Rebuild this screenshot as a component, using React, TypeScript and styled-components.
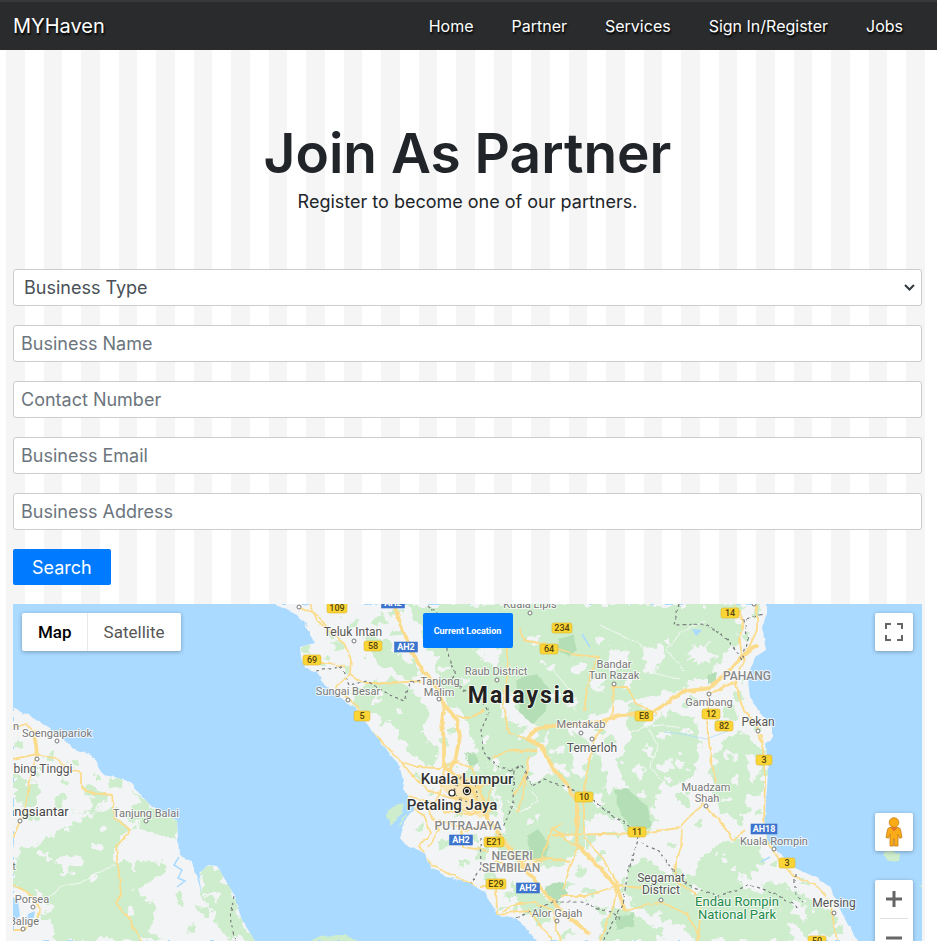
import React from "react";
import styled, { createGlobalStyle } from "styled-components";

const GlobalStyle = createGlobalStyle`
  * { box-sizing: border-box; }
  body { margin: 0; background: #fff; color: #212529; font-family: "Inter", "DM Sans", sans-serif; }
  button, input, select { font-family: inherit; }
`;

const Page = styled.div`
  display: flex;
  flex-direction: column;
  min-height: 100vh;
`;

const NavBar = styled.header`
  display: flex;
  align-items: center;
  justify-content: space-between;
  height: 50px;
  padding: 0 34px 0 13px;
  background: #292b2c;
  border-top: 2px solid #36383b;
`;

const Brand = styled.a`
  color: #fff;
  font-size: 20px;
  text-decoration: none;
  text-shadow: 1px 2px 2px #000;
`;

const NavLinks = styled.nav`
  display: flex;
  gap: 38px;
`;

const NavLink = styled.a`
  color: #fff;
  font-size: 16px;
  text-decoration: none;
  text-shadow: 1px 2px 2px #000;
`;

const Striped = styled.main`
  flex: 1;
  display: flex;
  flex-direction: column;
  margin: 0 12px 0 6px;
  padding: 0 3px 0 7px;
  background: repeating-linear-gradient(
    90deg,
    #f5f5f5 0 calc(100% / 49),
    #fff calc(100% / 49) calc(200% / 49)
  );
`;

const Hero = styled.section`
  display: flex;
  flex-direction: column;
  align-items: center;
  padding: 70px 0 51px;
  text-align: center;
`;

const Title = styled.h1`
  margin: 0;
  font-size: 55px;
  line-height: 66px;
  font-weight: 600;
`;

const Subtitle = styled.p`
  margin: 0;
  font-size: 18px;
  line-height: 32px;
`;

const Form = styled.form`
  display: flex;
  flex-direction: column;
  align-items: stretch;
  gap: 19px;
  margin-bottom: 19px;
`;

const fieldLook = `
  display: block;
  width: 100%;
  height: 37px;
  border: 1px solid #c9ccd0;
  border-radius: 3px;
  background: #fff;
  font-size: 18px;
  outline-color: #007bff;
`;

const TextField = styled.input`
  ${fieldLook}
  padding: 0 7px;
  color: #495057;
  &::placeholder { color: #6c757d; opacity: 1; }
`;

const SelectWrap = styled.div`
  position: relative;
  svg {
    position: absolute;
    right: 7px;
    top: 14px;
    pointer-events: none;
  }
`;

const SelectField = styled.select`
  ${fieldLook}
  appearance: none;
  padding: 0 24px 0 10px;
  color: #495057;
`;

const SearchButton = styled.button`
  align-self: flex-start;
  height: 36px;
  padding: 0 19px;
  border: 0;
  border-radius: 2px;
  background: #007bff;
  color: #fff;
  font-size: 18px;
`;

const MapFrame = styled.section`
  position: relative;
  flex: 1 0 337px;
  height: 337px;
  overflow: hidden;
  background: #aadaff;
  font-family: Roboto, sans-serif;
`;

const MapCanvas = styled.svg`
  display: block;
  width: 100%;
  height: 100%;
  font-family: Roboto, sans-serif;
`;

const Overlay = styled.div<{ $top: number; $side: "left" | "right" }>`
  position: absolute;
  top: ${(p) => p.$top}px;
  ${(p) => p.$side}: 9px;
  display: flex;
  flex-direction: ${(p) => (p.$side === "left" ? "row" : "column")};
  background: #fff;
  border-radius: 2px;
  box-shadow: 0 1px 4px rgba(0, 0, 0, 0.3);
`;

const TypeButton = styled.button<{ $active?: boolean }>`
  height: 38px;
  padding: ${(p) => (p.$active ? "0 15px 0 16px" : "0 16px")};
  border: 0;
  border-left: ${(p) => (p.$active ? "0" : "1px solid #e9e9e9")};
  background: none;
  color: ${(p) => (p.$active ? "#000" : "#565656")};
  font-size: 17px;
  font-weight: ${(p) => (p.$active ? 500 : 400)};
`;

const IconButton = styled.button`
  display: flex;
  align-items: center;
  justify-content: center;
  width: 38px;
  height: 38px;
  padding: 0;
  border: 0;
  background: none;
`;

const Divider = styled.div`
  height: 1px;
  margin: 0 5px;
  background: #e0e0e0;
`;

const LocationBar = styled.div`
  position: absolute;
  top: 9px;
  left: 0;
  right: 0;
  display: flex;
  justify-content: center;
  pointer-events: none;
`;

const LocationButton = styled.button`
  width: 90px;
  height: 35px;
  padding: 0;
  border: 0;
  border-radius: 2px;
  background: #007bff;
  color: #fff;
  font-size: 9px;
  font-weight: 700;
  pointer-events: auto;
`;

const WEST = "13,707 33,718 57,733 72,748 91,755 103,775 115,777 132,783 143,797 152,807 177,820 179,855 192,862 197,877 202,895 199,877 201,872 208,865 217,866 233,893 242,920 255,941 13,941";
const EAST = "273,604 283,608 297,615 309,627 303,624 310,633 315,643 300,647 301,658 305,668 318,672 322,682 340,697 357,710 370,728 387,750 400,767 405,793 415,808 407,817 400,837 407,845 425,853 430,867 447,877 470,883 485,892 497,915 517,918 530,933 537,941 858,941 847,923 837,903 830,887 817,878 793,867 775,848 767,840 765,817 768,773 766,743 772,737 772,727 760,713 750,697 748,680 755,657 766,650 762,627 767,613 767,604";

const GREENS = [
  "13,776 42,782 42,800 27,806 13,800",
  "13,856 40,841 68,829 90,815 112,806 115,818 133,826 118,845 116,861 135,868 161,857 167,869 134,890 136,898 150,900 157,914 148,930 161,941 57,941 50,926 43,914 50,904 36,895 13,888",
  "85,783 101,791 108,800 95,812 73,815 82,800",
  "108,777 120,779 126,785 119,790 109,787",
  "133,788 143,797 152,807 177,820 177,840 164,838 148,830 132,822 131,811 139,804",
  "201,875 209,866 217,866 233,893 242,920 255,941 228,941 216,920 204,893",
  "410,604 745,604 737,615 740,640 720,662 710,675 680,690 650,695 620,702 600,718 575,722 548,735 532,760 528,790 552,812 561,838 550,858 520,864 502,858 493,845 505,826 500,795 488,777 475,762 474,735 462,712 447,701 436,680 440,659 428,645 420,630",
  "352,688 378,678 400,681 418,697 430,713 428,731 406,730 389,722 368,717 353,703",
  "365,637 390,640 402,658 422,671 413,681 386,667 366,655",
  "393,717 426,735 440,757 433,769 405,749",
  "474,765 492,780 500,807 487,815 472,798 463,776",
  "520,785 549,773 581,780 613,792 650,784 655,830 630,834 618,819 588,817 578,854 552,869 526,858 506,842 520,822 507,803",
  "552,727 584,736 605,764 605,786 584,800 567,768 548,760",
  "630,705 665,713 696,718 699,752 688,784 662,781 652,811 630,802 619,767 628,737",
  "721,744 745,733 765,755 762,792 749,798 742,824 718,810 711,781 714,760",
  "717,842 750,838 761,860 745,888 709,898 679,888 694,865",
  "638,858 670,870 696,880 735,886 768,899 784,920 796,941 700,941 662,916 636,905 619,887",
  "742,880 779,883 801,894 829,910 843,935 805,933 768,914",
  "512,879 545,895 560,908 540,923 516,905",
  "614,904 647,922 664,941 602,941 603,923",
];

const DARK_GREENS = [
  "516,680 537,674 548,687 546,711 533,724 519,713",
  "559,639 573,635 577,650 568,656 558,650",
  "527,836 538,829 549,843 547,859 530,861",
  "614,790 626,788 647,806 652,825 641,833 622,818",
  "545,887 562,881 567,893 556,902 545,894",
  "616,918 634,913 634,926 616,930",
  "464,754 475,752 479,763 469,768",
  "708,674 717,672 715,684 708,684",
];

const CLEARINGS = [
  "496,691 510,694 526,721 540,733 535,739 512,722 504,711",
  "604,663 611,649 624,652 628,667 613,674",
  "642,650 650,644 664,651 660,666 646,671",
  "686,649 707,643 716,653 706,665 692,662",
  "571,752 580,747 589,762 581,774 572,768",
  "478,652 491,642 502,652 491,664",
  "656,762 670,760 674,772 664,779",
  "641,716 652,706 662,714 650,724",
  "28,831 48,827 54,835 35,846 22,849",
  "55,861 70,855 82,857 80,865 62,873",
  "80,798 94,795 90,809 74,816",
  "600,870 616,868 623,880 607,887",
  "746,752 759,760 755,783 748,774",
  "790,900 808,906 811,917 794,916",
  "741,875 765,880 761,893 743,889",
];

/* Small scattered vegetation and clearing patches: x, y, radius */
const SPECKS_GREEN: [number, number, number][] = [
  [20, 744, 5], [50, 756, 4], [75, 762, 5], [34, 771, 4], [64, 781, 5], [98, 776, 3], [60, 801, 6], [28, 817, 5], [180, 898, 4],
  [204, 910, 6], [192, 930, 5], [322, 662, 4], [338, 644, 5], [352, 624, 6], [380, 620, 7], [396, 611, 5], [372, 649, 4], [330, 634, 4], [308, 650, 5],
  [346, 669, 4], [398, 633, 5], [443, 741, 6], [452, 729, 5], [449, 764, 5], [417, 779, 4], [431, 791, 4], [421, 826, 5], [443, 844, 6], [462, 862, 5],
  [480, 852, 6], [489, 876, 5], [510, 895, 5], [501, 908, 4], [547, 921, 5], [567, 932, 6], [589, 893, 7], [602, 854, 5], [611, 835, 5], [579, 871, 6],
  [636, 756, 8], [612, 741, 6], [599, 730, 5], [644, 738, 9], [672, 735, 8], [683, 800, 7], [701, 824, 5], [672, 847, 5], [731, 712, 7], [740, 698, 5], [747, 680, 3],
  [722, 724, 6], [690, 700, 6], [758, 726, 4], [759, 815, 4], [775, 862, 3], [805, 881, 4], [823, 905, 4], [589, 842, 6], [568, 885, 5], [600, 911, 5], [650, 897, 6],
  [748, 637, 5], [757, 612, 4], [726, 648, 4], [607, 804, 5], [590, 780, 6], [462, 812, 4], [478, 838, 4], [661, 688, 4], [590, 695, 4], [655, 930, 6], [700, 867, 7],
];
const SPECKS_WHITE: [number, number, number][] = [
  [489, 625, 4], [532, 641, 5], [550, 667, 5], [580, 668, 6], [600, 641, 5], [670, 640, 4], [596, 684, 7], [572, 700, 5], [555, 694, 4], [628, 683, 5],
  [442, 627, 4], [461, 641, 5], [447, 672, 4], [465, 682, 4], [378, 697, 4], [399, 711, 4], [412, 684, 4], [648, 750, 5], [638, 770, 6], [680, 762, 7],
  [664, 735, 5], [686, 731, 4], [730, 755, 5], [736, 780, 4], [727, 800, 5], [642, 794, 4], [598, 800, 5], [566, 789, 4], [534, 820, 4], [571, 838, 5],
  [105, 830, 4], [97, 847, 5], [46, 856, 4], [142, 835, 5], [154, 847, 6], [94, 879, 3], [130, 911, 5], [698, 890, 4], [722, 859, 4], [733, 871, 4], [652, 879, 4],
  [683, 930, 4], [705, 655, 4], [618, 725, 5], [587, 755, 5], [560, 750, 4], [526, 735, 4], [487, 740, 4], [494, 765, 5], [507, 780, 4], [771, 910, 5], [213, 894, 4],
];

const MAJOR_ROADS = [
  "M394 604 L402 629 L412 652 L424 672 L438 688 L444 704 L442 722 L444 744 L444 767",
  "M444 704 L456 719 L460 736 L456 756 L450 770",
  "M444 767 L457 776 L472 789 L479 804 L489 821 L506 843 L522 864 L542 889 L560 910 L590 934",
  "M527 738 L537 729 L552 726 L577 724 L600 722 L620 715 L650 714 L667 703 L681 692 L710 688 L729 670 L742 657 L758 644",
  "M527 738 L541 746 L553 768 L566 783 L577 802 L577 834 L577 844 L598 866 L617 887 L625 911",
];

const ROADS = [
  "M309 604 L317 620 L334 636 L346 645 L351 660 L350 674 L363 683 L390 683 L421 681",
  "M300 608 L319 616 L326 626 L342 636", "M307 663 L330 663 L345 667", "M350 674 L335 687 L357 706 L367 727 L390 750 L403 764",
  "M403 764 L412 775 L428 790 L450 798 L473 800", "M400 761 L417 767 L440 768 L457 761 L472 769", "M408 796 L431 802 L445 812 L466 814 L492 811",
  "M401 787 L407 804 L424 815 L431 833 L419 846 L431 865 L452 875 L478 887", "M444 769 L440 794 L429 811 L439 830 L429 847",
  "M472 768 L480 788 L485 806 L490 822 L500 839 L526 872", "M451 782 L474 788 L492 782 L487 806 L471 814 L451 803", "M439 820 L460 827 L463 847 L489 851",
  "M463 832 L487 824 L500 832", "M480 887 L496 887 L497 914 L528 911 L537 921 L553 941", "M502 911 L517 904 L536 903 L552 910 L560 941",
  "M493 758 L512 749 L522 751 L538 750", "M505 625 L508 670 L503 705 L509 733 L527 739", "M456 715 L463 718 L478 715 L484 709", "M520 627 L523 640 L548 645 L577 655 L599 657 L589 677 L584 711",
  "M614 685 L613 713 L597 735 L590 757 L584 787 L584 834", "M553 835 L604 834 L642 833 L679 828 L689 817 L704 804", "M682 829 L681 847 L674 870 L678 883 L695 893 L701 905 L698 941",
  "M563 824 L553 828 L566 840 L578 846 L570 868 L563 889", "M507 855 L522 861 L549 858 L570 862", "M495 860 L512 869 L541 861 L553 827", "M561 896 L586 896 L616 886 L644 888",
  "M584 837 L600 855 L617 882 L614 904 L600 941", "M625 911 L660 902 L687 914 L700 937", "M735 604 L743 620 L740 641 L742 657", "M757 604 L757 630 L745 656 L735 685 L744 711 L755 722 L762 744",
  "M737 683 L724 685 L709 695 L707 725 L711 759 L716 783", "M710 694 L733 683", "M762 735 L765 780 L764 820 L767 839", "M706 807 L723 824 L733 840 L745 830",
  "M767 839 L775 854 L793 876 L815 884 L830 901 L837 941", "M612 687 L627 687 L637 704 L658 714", "M513 796 L523 782 L530 757", "M527 768 L525 784 L518 812",
  "M13 728 L26 724 L34 733 L37 754", "M13 759 L37 754 L57 759 L70 770 L81 773 L81 788 L94 793 L112 795 L114 818 L131 830 L116 847 L121 894 L116 903 L128 918 L141 941",
  "M37 754 L29 779 L27 804 L13 838", "M13 885 L29 893 L41 910 L35 922 L21 930 L13 930",
];

const WHITE_ROADS = [
  "M44 902 L62 886 L80 883 L101 871 L116 865", "M131 829 L140 819 L135 848", "M468 768 L467 756 L457 739", "M505 625 L491 655 L480 660", "M551 668 L570 690 L575 711",
  "M507 800 L520 812 L538 801 L531 790", "M600 625 L642 645 L651 672 L680 680", "M684 670 L666 650 L685 629 L707 621", "M622 735 L650 725 L680 727", "M663 782 L650 767 L658 747 L649 728",
];

const BORDERS = [
  "M428 605 L437 614 L443 635 L450 661 L455 675 L449 682 L466 691 L480 697 L489 713 L481 730 L483 750 L496 766 L514 771 L513 802 L506 820 L500 835",
  "M316 671 L341 667 L349 685 L367 681 L390 695 L404 701 L410 683 L421 680", "M510 770 L522 766 L532 786 L544 780 L567 787 L592 799 L616 818 L640 833 L627 877 L623 905 L603 941",
  "M641 843 L659 851 L671 869 L686 884 L718 896 L751 885 L774 893 L790 903 L798 907", "M679 604 L674 625 L706 624 L728 640 L742 660 L748 640 L744 620 L766 613",
  "M480 838 L481 866 L471 884", "M517 918 L552 902 L581 902 L613 913 L621 919", "M795 874 L795 893 L803 902", "M451 790 L461 801 L478 803 L476 785 L461 778 L454 790", "M234 896 L230 917 L235 941",
];

type Label = [text: string, x: number, y: number, size: number, color: string, weight: number];
const LABELS: Label[] = [
  ["Teluk Intan", 353, 636, 12, "#555", 400], ["Kuala Lipis", 530, 608, 11, "#777", 400], ["Tanjong", 440, 685, 11, "#777", 400], ["Malim", 439, 696, 11, "#777", 400],
  ["Sungai Besar", 348, 695, 11, "#777", 400], ["Raub District", 496, 675, 11, "#777", 400], ["Bandar", 614, 668, 11, "#777", 400], ["Tun Razak", 614, 679, 11, "#777", 400],
  ["PAHANG", 747, 680, 12, "#888", 500], ["Gambang", 709, 706, 11, "#777", 400], ["Pekan", 758, 726, 12, "#555", 400], ["Mentakab", 581, 728, 11, "#777", 400],
  ["Temerloh", 592, 752, 12, "#555", 400], ["Kuala Lumpur", 467, 784, 15, "#333", 500], ["Petaling Jaya", 452, 810, 15, "#333", 500], ["PUTRAJAYA", 468, 830, 12, "#888", 500],
  ["NEGERI", 512, 860, 12, "#888", 500], ["SEMBILAN", 511, 872, 12, "#888", 500], ["Alor Gajah", 557, 917, 11, "#777", 400], ["Muadzam", 706, 791, 11, "#777", 400],
  ["Shah", 707, 802, 11, "#777", 400], ["Kuala Rompin", 774, 845, 11, "#777", 400], ["Segamat", 661, 882, 12, "#555", 400], ["District", 661, 894, 12, "#555", 400],
  ["Endau Rompin", 737, 906, 13, "#1f8a4c", 400], ["National Park", 737, 919, 13, "#1f8a4c", 400], ["Mersing", 834, 907, 12, "#555", 400],
  ["Soengaipariok", 57, 737, 11, "#777", 400], ["n", 16, 730, 11, "#777", 400], ["bing Tinggi", 43, 773, 12, "#555", 400], ["angsiantar", 38, 816, 13, "#444", 400],
  ["Tanjung Balai", 146, 817, 11, "#777", 400], ["Porsea", 32, 903, 11, "#777", 400], ["Balige", 24, 925, 11, "#777", 400], ["t", 14, 870, 11, "#777", 400],
];

const TOWNS: [number, number][] = [
  [299, 607], [354, 641], [530, 613], [348, 700], [439, 699], [497, 680], [614, 684], [709, 694], [758, 731], [581, 733], [592, 739],
  [557, 921], [706, 806], [774, 849], [661, 900], [834, 913], [57, 741], [37, 759], [20, 821], [146, 821], [33, 907], [23, 929], [754, 604],
];

type Shield = [text: string, x: number, y: number, highway: boolean];
const SHIELDS: Shield[] = [
  ["109", 337, 608, false], ["58", 373, 646, false], ["69", 312, 660, false], ["5", 362, 716, false], ["234", 562, 628, false], ["64", 549, 649, false], ["14", 730, 613, false],
  ["E8", 644, 716, false], ["12", 711, 714, false], ["82", 724, 726, false], ["3", 764, 760, false], ["10", 584, 797, false], ["11", 637, 832, false], ["3", 787, 863, false],
  ["E21", 494, 842, false], ["E29", 496, 884, false], ["50", 817, 941, false], ["AH2", 393, 603, true], ["AH2", 406, 647, true], ["AH2", 461, 840, true], ["AH2", 528, 888, true], ["AH18", 764, 829, true],
];

function MapDrawing() {
  return (
    <MapCanvas viewBox="13 604 909 337" preserveAspectRatio="xMidYMin slice" role="img" aria-label="Map of Malaysia">
      <defs>
        <filter id="organic" x="-5%" y="-5%" width="110%" height="110%">
          <feTurbulence type="fractalNoise" baseFrequency="0.09" numOctaves="3" seed="4" result="noise" />
          <feDisplacementMap in="SourceGraphic" in2="noise" scale="19" xChannelSelector="R" yChannelSelector="G" />
        </filter>
        <filter id="coast">
          <feTurbulence type="fractalNoise" baseFrequency="0.12" numOctaves="2" seed="8" result="noise" />
          <feDisplacementMap in="SourceGraphic" in2="noise" scale="4" xChannelSelector="R" yChannelSelector="G" />
        </filter>
        <clipPath id="land">
          <polygon points={WEST} />
          <polygon points={EAST} />
        </clipPath>
      </defs>
      <rect x="0" y="590" width="940" height="370" fill="#aadaff" />
      <g fill="#f3f4f5" filter="url(#coast)">
        <polygon points={WEST} />
        <polygon points={EAST} />
        <path d="M311 941 L319 936 L344 935 L359 941Z" fill="#cdedcd" />
        <path d="M386 815 L393 806 L404 804 L401 814 L391 826Z M401 819 L408 811 L398 830Z" fill="#cdedcd" />
        <path d="M884 854 L889 850 L900 854 L899 861 L888 862Z M917 884 h4 v4Z" fill="#cdedcd" />
      </g>
      <g clipPath="url(#land)">
        <g filter="url(#organic)">
          <g fill="#cdedcd">
            {GREENS.map((p) => <polygon key={p} points={p} />)}
            {SPECKS_GREEN.map(([x, y, r]) => <ellipse key={`${x}-${y}`} cx={x} cy={y} rx={r} ry={r * 0.75} />)}
          </g>
          <g fill="#f3f4f5">
            {CLEARINGS.map((p) => <polygon key={p} points={p} />)}
            {SPECKS_WHITE.map(([x, y, r]) => <ellipse key={`${x}-${y}`} cx={x} cy={y} rx={r} ry={r * 0.8} />)}
          </g>
        </g>
        <g fill="#b4dfb6" filter="url(#coast)">
          {DARK_GREENS.map((p) => <polygon key={p} points={p} />)}
        </g>
        <path d="M13 897 L18 901 L20 916 L13 922Z M28 914 L35 911 L34 918 L27 919Z M692 629 L702 630 L696 636Z" fill="#aadaff" />
        <g fill="none" stroke="#f5f8f5" strokeWidth="1" filter="url(#coast)">
          {WHITE_ROADS.map((d) => <path key={d} d={d} />)}
        </g>
        <path d="M179 857 L174 865 L182 870 L178 878 L185 881 L177 887 M582 634 L590 647 M761 862 L770 857" fill="none" stroke="#aadaff" strokeWidth="1.5" />
        <path d="M664 732 L682 734 L706 739 L728 731" fill="none" stroke="#aadaff" strokeWidth="0.7" />
        <path d="M440 785 L457 775 L476 780 L482 796 L492 809 L481 818 L462 808Z" fill="#fbe3a4" opacity="0.75" filter="url(#coast)" />
        <g fill="none" stroke="#fbdc8c" strokeWidth="1.8" strokeLinejoin="round" filter="url(#coast)">
          {ROADS.map((d) => <path key={d} d={d} />)}
        </g>
        <g fill="none" stroke="#fbdc8c" strokeWidth="3.8" strokeLinejoin="round" filter="url(#coast)">
          {MAJOR_ROADS.map((d) => <path key={d} d={d} />)}
          <path d="M34 730 L37 754" />
        </g>
        <g fill="none" stroke="#777b7c" strokeWidth="1.2" strokeDasharray="3 3" filter="url(#coast)">
          {BORDERS.map((d) => <path key={d} d={d} />)}
        </g>
      </g>
      <g fill="#fff" stroke="#777" strokeWidth="1">
        {TOWNS.map(([x, y]) => <circle key={`${x}-${y}`} cx={x} cy={y} r="2" />)}
      </g>
      <g fill="#fff" stroke="#222" strokeWidth="1.2">
        <circle cx="452" cy="793" r="3" />
        <circle cx="467" cy="791" r="3.6" />
        <circle cx="467" cy="791" r="1.4" fill="#222" />
      </g>
      {SHIELDS.map(([text, x, y, highway]) => {
        const w = highway ? 14 + text.length * 3 : 14 + text.length * 2;
        return (
          <g key={`${text}-${x}`}>
            <rect x={x - w / 2} y={y - 5} width={w} height="10" rx={highway ? 0 : 2} fill={highway ? "#3d74cc" : "#fbd436"} stroke={highway ? "#3d74cc" : "#dcb62e"} strokeWidth="0.6" />
            <text x={x} y={y + 3} textAnchor="middle" fontSize="9" fontWeight={highway ? 700 : 500} fill={highway ? "#fff" : "#54450d"}>{text}</text>
          </g>
        );
      })}
      <g textAnchor="middle" stroke="#fff" strokeWidth="2" strokeOpacity="0.75" strokeLinejoin="round" paintOrder="stroke">
        {LABELS.map(([text, x, y, size, color, weight]) => (
          <text key={`${text}-${x}`} x={x} y={y} fontSize={size} fill={color} fontWeight={weight}>{text}</text>
        ))}
        <text x="522" y="703" fontSize="23" fontWeight="700" letterSpacing="2" fill="#222">Malaysia</text>
      </g>
    </MapCanvas>
  );
}

const NAV = ["Home", "Partner", "Services", "Sign In/Register", "Jobs"];
const FIELDS = [
  { label: "Business Name", type: "text" },
  { label: "Contact Number", type: "tel" },
  { label: "Business Email", type: "email" },
  { label: "Business Address", type: "text" },
];

export default function App() {
  return (
    <Page>
      <GlobalStyle />
      <NavBar>
        <Brand href="#home">MYHaven</Brand>
        <NavLinks>
          {NAV.map((item) => <NavLink key={item} href={`#${item.toLowerCase().replace(/\W+/g, "-")}`}>{item}</NavLink>)}
        </NavLinks>
      </NavBar>
      <Striped>
        <Hero>
          <Title>Join As Partner</Title>
          <Subtitle>Register to become one of our partners.</Subtitle>
        </Hero>
        <Form onSubmit={(e) => e.preventDefault()}>
          <SelectWrap>
            <SelectField aria-label="Business Type" defaultValue="">
              <option value="">Business Type</option>
            </SelectField>
            <svg width="11" height="9" viewBox="0 0 11 9" fill="none" stroke="#343a40" strokeWidth="2" aria-hidden="true">
              <path d="M1 2 L5.5 6.5 L10 2" />
            </svg>
          </SelectWrap>
          {FIELDS.map((f) => <TextField key={f.label} type={f.type} placeholder={f.label} aria-label={f.label} />)}
          <SearchButton type="submit">Search</SearchButton>
        </Form>
        <MapFrame>
          <MapDrawing />
          <Overlay $top={9} $side="left">
            <TypeButton $active>Map</TypeButton>
            <TypeButton>Satellite</TypeButton>
          </Overlay>
          <LocationBar>
            <LocationButton>Current Location</LocationButton>
          </LocationBar>
          <Overlay $top={9} $side="right">
            <IconButton aria-label="Toggle fullscreen view">
              <svg width="18" height="18" viewBox="0 0 18 18" fill="#666">
                <path d="M0 0h6v2H2v4H0zM12 0h6v6h-2V2h-4zM0 12h2v4h4v2H0zM16 12h2v6h-6v-2h4z" />
              </svg>
            </IconButton>
          </Overlay>
          <Overlay $top={209} $side="right">
            <IconButton aria-label="Street View">
              <svg width="18" height="30" viewBox="0 0 18 30">
                <path d="M5 10.5h8q2 0 2.5 2l1.5 8-2.5.7-1.5-4V29H9.6v-7H8.4v7H5V17.2l-1.5 4L1 20.5l1.5-8q.5-2 2.5-2z" fill="#fbab18" stroke="#c27e16" strokeWidth="0.8" />
                <circle cx="9" cy="5.5" r="4.8" fill="#fbab18" stroke="#c27e16" strokeWidth="0.8" />
                <path d="M5.5 10.5 9 14.5l3.5-4z" fill="#e5732a" />
              </svg>
            </IconButton>
          </Overlay>
          <Overlay $top={276} $side="right">
            <IconButton aria-label="Zoom in">
              <svg width="18" height="18" viewBox="0 0 18 18" fill="#666">
                <path d="M7.5 1h3v6.500H17v3h-6.500V17h-3v-6.500H1v-3h6.500z" />
              </svg>
            </IconButton>
            <Divider />
            <IconButton aria-label="Zoom out">
              <svg width="18" height="18" viewBox="0 0 18 18" fill="#666">
                <path d="M1 7.500h16v3H1z" />
              </svg>
            </IconButton>
          </Overlay>
        </MapFrame>
      </Striped>
    </Page>
  );
}
